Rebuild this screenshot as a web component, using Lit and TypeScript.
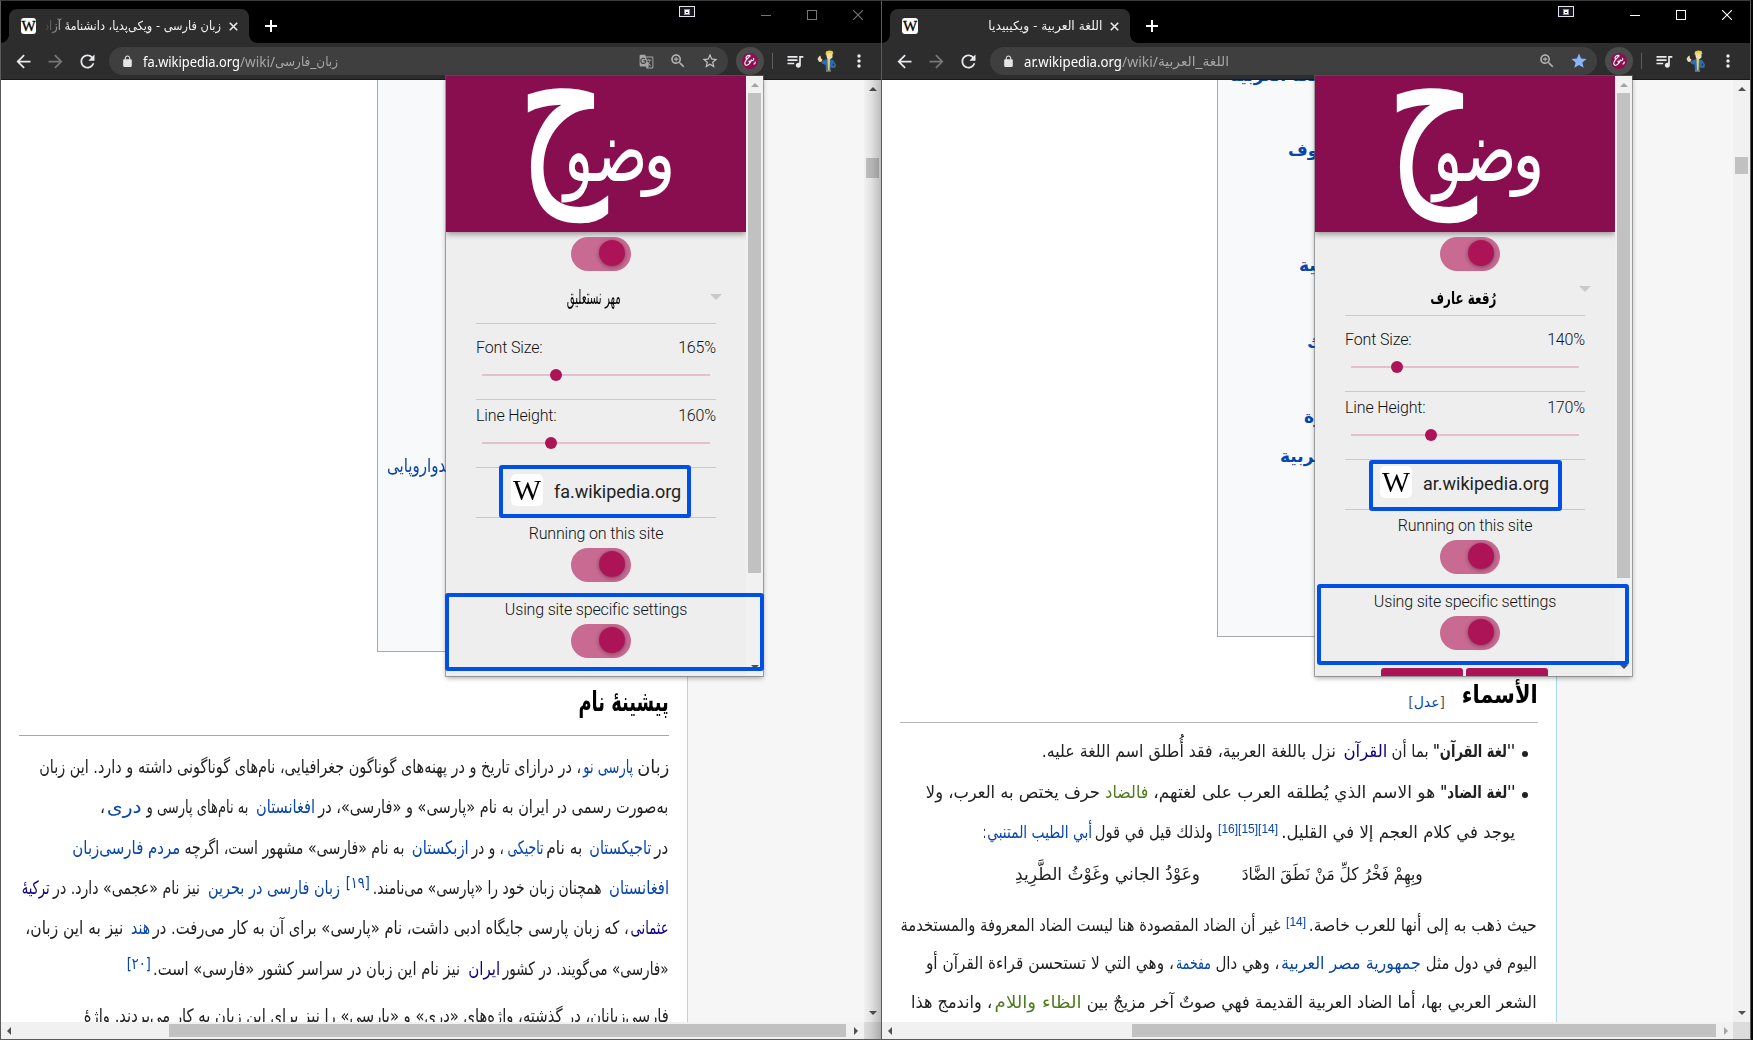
import { LitElement, html, css, svg, nothing } from "lit";
import { customElement, property } from "lit/decorators.js";
import { styleMap } from "lit/directives/style-map.js";

type Kind = "t" | "b" | "a" | "v" | "g" | "s" | "n";
/** kind, text, right edge, left edge (window-independent page x) */
type Seg = [Kind, string, number, number];

interface WinData {
  id: "fa" | "ar";
  tab: string;
  host: string;
  path: string;
  pathWidth: number;
}

/** One run of text squeezed or stretched to a given width. */
@customElement("fit-text")
class FitText extends LitElement {
  @property({ type: Number }) width = 0;
  @property() origin = "right";
  static styles = css`
    :host { display: block; flex: none; white-space: nowrap; }
    .run { display: inline-block; white-space: pre; }
  `;
  render() {
    return html`<span class="run"><slot></slot></span>`;
  }
  updated() {
    const run = this.renderRoot.querySelector(".run") as HTMLElement;
    this.style.width = this.width + "px";
    run.style.transform = "none";
    const natural = run.getBoundingClientRect().width;
    if (natural > 0) {
      run.style.transformOrigin = this.origin + " center";
      run.style.transform = `scaleX(${this.width / natural})`;
    }
  }
}

const P = {
  back: "M20 11H7.83l5.59-5.59L12 4l-8 8 8 8 1.41-1.41L7.83 13H20v-2z",
  fwd: "M12 4l-1.41 1.41L16.17 11H4v2h12.17l-5.58 5.59L12 20l8-8z",
  reload: "M17.65 6.35C16.2 4.9 14.21 4 12 4c-4.42 0-7.99 3.58-7.99 8s3.57 8 7.99 8c3.73 0 6.84-2.55 7.73-6h-2.08c-.82 2.33-3.04 4-5.65 4-3.31 0-6-2.69-6-6s2.69-6 6-6c1.66 0 3.14.69 4.22 1.78L13 11h7V4l-2.35 2.35z",
  lock: "M18 8h-1V6c0-2.76-2.24-5-5-5S7 3.24 7 6v2H6c-1.1 0-2 .9-2 2v10c0 1.1.9 2 2 2h12c1.1 0 2-.9 2-2V10c0-1.1-.9-2-2-2zM15.1 8H8.9V6c0-1.71 1.39-3.1 3.1-3.1s3.1 1.39 3.1 3.1v2z",
  translate: "M21 4H11l-1-3H3c-1.1 0-2 .9-2 2v15c0 1.1.9 2 2 2h8l1 3h9c1.1 0 2-.9 2-2V6c0-1.1-.9-2-2-2zM7 16c-2.76 0-5-2.24-5-5s2.24-5 5-5c1.35 0 2.48.5 3.35 1.3L9.03 8.57c-.38-.36-1.04-.78-2.03-.78-1.74 0-3.15 1.44-3.15 3.21S5.26 14.21 7 14.21c2.01 0 2.84-1.44 2.92-2.41H7v-1.71h4.68c.07.31.12.61.12 1.02C11.8 13.97 9.89 16 7 16zm6.17-5.42h3.7c-.43 1.25-1.11 2.43-2.05 3.47-.31-.35-.6-.72-.86-1.1l-.79-2.37zm8.33 9.92c0 .55-.45 1-1 1H14l2-2.5-1.04-3.1 3.1 3.1.92-.92-3.3-3.25.02-.02c1.13-1.25 1.93-2.69 2.4-4.22H20v-1.3h-4.53V8h-1.29v1.29h-1.44L11.46 5.5h9.04c.55 0 1 .45 1 1v14z",
  zoom: "M15.5 14h-.79l-.28-.27C15.41 12.59 16 11.11 16 9.5 16 5.91 13.09 3 9.5 3S3 5.91 3 9.5 5.91 16 9.5 16c1.61 0 3.09-.59 4.23-1.57l.27.28v.79l5 4.99L20.49 19l-4.99-5zm-6 0C7.01 14 5 11.99 5 9.5S7.01 5 9.5 5 14 7.01 14 9.5 11.99 14 9.5 14zM12.5 10.2h-2.3v2.3H8.8v-2.3H6.5V8.8h2.3V6.5h1.4v2.3h2.3v1.4z",
  starLine: "M22 9.24l-7.19-.62L12 2 9.19 8.63 2 9.24l5.46 4.73L5.82 21 12 17.27 18.18 21l-1.63-7.03L22 9.24zM12 15.4l-3.76 2.27 1-4.28-3.32-2.88 4.38-.38L12 6.1l1.71 4.04 4.38.38-3.32 2.88 1 4.28L12 15.4z",
  star: "M12 17.27L18.18 21l-1.64-7.03L22 9.24l-7.19-.61L12 2 9.19 8.63 2 9.24l5.46 4.73L5.82 21z",
  queue: "M15 6H3v2h12V6zm0 4H3v2h12v-2zM3 16h8v-2H3v2zM17 6v8.18c-.31-.11-.65-.18-1-.18-1.66 0-3 1.34-3 3s1.34 3 3 3 3-1.34 3-3V8h3V6h-5z",
};

const icon = (d: string, size: number, fill: string) =>
  html`<svg width=${size} height=${size} viewBox="0 0 24 24"><path d=${d} fill=${fill}></path></svg>`;

const tri = (dir: string, fill = "#505050") => {
  const pts: Record<string, string> = {
    up: "0,4 4,0 8,4", down: "0,0 8,0 4,4", left: "4,0 4,8 0,4", right: "0,0 4,4 0,8",
  };
  const v = dir === "up" || dir === "down";
  return html`<svg width=${v ? 8 : 4} height=${v ? 4 : 8}><polygon points=${pts[dir]} fill=${fill}></polygon></svg>`;
};

const faLines: Seg[][] = [
  [["t", "زبان", 669, 637], ["a", "پارسی نو", 633, 583], ["t", "، در درازای تاریخ و در پهنه‌های گوناگون جغرافیایی، نام‌های گوناگونی داشته و دارد. این زبان", 581, 39]],
  [["t", "به‌صورت رسمی در ایران به نام «پارسی» و «فارسی»، در", 668, 318], ["a", "افغانستان", 315, 256], ["t", "به نام‌های پارسی و", 248, 146], ["a", "دری", 142, 107], ["t", "،", 105, 100]],
  [["t", "در", 668, 654], ["a", "تاجیکستان", 651, 589], ["t", "به نام", 582, 546], ["a", "تاجیکی", 543, 507], ["t", "، و در", 504, 472], ["a", "ازبکستان", 469, 412], ["t", "به نام «فارسی» مشهور است، اگرچه", 404, 184], ["a", "مردم فارسی‌زبان", 180, 72]],
  [["a", "افغانستان", 669, 609], ["t", "همچنان زبان خود را «پارسی» می‌نامند.", 602, 373], ["s", "[۱۹]", 370, 346], ["a", "زبان فارسی در بحرین", 340, 208], ["t", "نیز نام «عجمی» دارد. در", 200, 53], ["v", "ترکیهٔ", 50, 22]],
  [["v", "عثمانی", 669, 631], ["t", "، که زبان پارسی جایگاه ادبی داشت، نام «پارسی» برای آن به کار می‌رفت. در", 629, 153], ["a", "هند", 150, 131], ["t", "نیز به این زبان،", 123, 25]],
  [["t", "«فارسی» می‌گویند. در کشور", 669, 503], ["v", "ایران", 500, 468], ["t", "نیز نام این زبان در سراسر کشور «فارسی» است.", 460, 153], ["s", "[۲۰]", 151, 127]],
  [["t", "فارسی‌زبانان، در گذشته، واژه‌های «دری» و «پارسی» را نیز برای این زبان به کار می‌بردند. واژهٔ", 669, 84]],
];

const arList: Seg[][] = [
  [["b", "''لغة القرآن\"", 1514, 1432], ["t", "بما أن", 1428, 1391], ["v", "القرآن", 1386, 1342], ["t", "نزل باللغة العربية، فقد أُطلق اسم اللغة عليه.", 1335, 1041]],
  [["b", "''لغة الضاد\"", 1514, 1439], ["t", "هو الاسم الذي يُطلقه العرب على لغتهم،", 1434, 1152], ["g", "فالضاد", 1147, 1104], ["t", "حرف يختص به العرب، ولا", 1099, 925]],
  [["t", "يوجد في كلام العجم إلا في القليل.", 1515, 1281], ["n", "[14][15][16]", 1278, 1218], ["t", "ولذلك قيل في قول", 1213, 1095], ["a", "أبي الطيب المتنبي", 1092, 987], ["t", ":", 986, 983]],
  [["t", "وبِهِمْ فَخْرُ كلِّ مَنْ نَطَقَ الضَّادَ", 1423, 1242], ["t", "وعَوْذُ الجاني وغَوْثُ الطَّرِيدِ", 1200, 1015]],
];
const arPara: Seg[][] = [
  [["t", "حيث ذهب به إلى أنها للعرب خاصة.", 1537, 1309], ["n", "[14]", 1306, 1286], ["t", "غير أن الضاد المقصودة هنا ليست الضاد المعروفة والمستخدمة", 1280, 900]],
  [["t", "اليوم في دول مثل", 1537, 1426], ["a", "جمهورية مصر العربية", 1421, 1281], ["t", "، وهي دال", 1279, 1215], ["a", "مفخمة", 1211, 1176], ["t", "، وهي التي لا تستحسن قراءة القرآن أو", 1174, 926]],
  [["t", "الشعر العربي بها، أما الضاد العربية القديمة فهي صوتٌ آخر مزيجٌ بين", 1537, 1087], ["g", "الظاء واللام", 1082, 995], ["t", "، واندمج هذا", 992, 911]],
];

const line = (segs: Seg[], edge: number, cls = "") => {
  let prev = edge;
  return html`<div class="line ${cls}">${segs.map(([k, t, r, l]) => {
    const gap = prev - r;
    prev = l;
    return html`<fit-text class="k-${k}" .width=${r - l} style=${styleMap({ marginRight: gap + "px" })}>${t}</fit-text>`;
  })}</div>`;
};

const avatar = svg`<svg width="22" height="22" viewBox="0 0 22 22">
  <path d="M3 6.5 4.5 5.5 5 8.5 6.5 9.5 5.5 12 3 11.8 1.5 9z" fill="#f0dfae"/>
  <path d="M5 11.5 11 9 17 10 20 14.500 19.500 17.500 16 18 15 17 14.500 21 10 21 9.500 15 6 13.500z" fill="#2f6eb5"/>
  <path d="M11.500 9 14 9 13.500 20 12 20z" fill="#f2cf55"/>
  <path d="M17 13 18.500 15 16.500 16z" fill="#2b2b2b"/>
  <path d="M10 3 16.500 2.500 16.500 7.500 14 9.500 11 8.500z" fill="#f0dfae"/>
  <path d="M9.500 4.500 10 1.500 13 .5 16.500 1 17.500 4 15.500 3.500 11.500 3.500 11 5z" fill="#ecd03f"/>
  <path d="M10 20.500h5v1h-5z" fill="#c8a94a"/></svg>`;

const logo = html`<svg class="logo" width="150" height="140" viewBox="0 0 150 140" direction="rtl">
  <g fill="#fff" font-family="DejaVu Sans" text-anchor="middle">
    <text transform="translate(133 96) scale(.92 1)" font-size="74">و</text>
    <text transform="translate(80 98) scale(.69 1)" font-size="88">ضو</text>
    <text transform="translate(36 91) scale(.7 1)" font-size="202">ح</text>
  </g></svg>`;

@customElement("app-root")
class AppRoot extends LitElement {
  static styles = css`
    * { box-sizing: border-box; }
    :host { display: block; width: 1753px; height: 1040px; overflow: hidden; background: #050505; font-family: "DejaVu Sans", sans-serif; }
    .desk { display: flex; height: 1040px; }
    svg { display: block; flex: none; }
    .logo { overflow: visible; }
    .win { position: relative; flex: none; height: 1040px; display: flex; flex-direction: column; border: solid #5a5a5a; border-width: 1px 0 1px 1px; border-top-color: #3a3a3a; overflow: hidden; background: #fff; }
    .fa { width: 881px; }
    .ar { width: 870px; border-right-width: 1px; }

    .strip { flex: none; height: 42px; display: flex; background: #000; padding-left: 8px; }
    .tab { position: relative; width: 240px; margin-top: 8px; height: 34px; border-radius: 8px 8px 0 0; background: #2d2d2d; display: flex; align-items: center; padding: 0 11px 0 12px; }
    .tab::before, .tab::after { content: ""; position: absolute; bottom: 0; width: 8px; height: 8px; }
    .tab::before { left: -8px; background: radial-gradient(circle at 0 0, #000 7.5px, #2d2d2d 8px); }
    .tab::after { right: -8px; background: radial-gradient(circle at 100% 0, #000 7.5px, #2d2d2d 8px); }
    .fav { display: flex; align-items: center; justify-content: center; background: #fff; color: #000; font-family: "Liberation Serif", serif; }
    .fav.s { width: 16px; height: 16px; border-radius: 3px; font-size: 15px; line-height: 16px; overflow: hidden; -webkit-text-stroke: .3px #000; }
    .title { flex: 1; height: 22px; line-height: 22px; margin-left: 8px; display: flex; direction: rtl; font-size: 12.5px; color: #f2f2f2; margin-right: 8px; }
    .title.fade { -webkit-mask-image: linear-gradient(90deg, transparent, #000 24px); mask-image: linear-gradient(90deg, transparent, #000 24px); }
    .plus { margin: 19px 0 0 16px; }
    .rec { margin: 5px 0 0 auto; }
    .ctl { display: flex; height: 28px; }
    .ctl span { width: 46px; display: flex; align-items: center; justify-content: center; }

    .bar { flex: none; height: 37px; display: flex; align-items: center; background: #2d2d2d; padding: 0 6px; border-bottom: 1px solid #191919; }
    .cell { width: 32px; height: 28px; display: flex; align-items: center; justify-content: center; flex: none; }
    .omni { flex: 1; height: 28px; border-radius: 14px; background: #3f3f3f; margin: 0 8px 0 6px; display: flex; align-items: center; padding-right: 2px; font: 14.5px/28px "Noto Sans", "Open Sans", "DejaVu Sans", sans-serif; color: #fff; }
    .omni .lock { width: 34px; padding-left: 12px; }
    .omni .dim { color: #a3a6aa; }
    .omni .ara { font: 13.5px/28px "DejaVu Sans", sans-serif; }
    .grow { flex: 1; }
    .ext { width: 28px; height: 28px; border-radius: 14px; background: #4b4b4b; display: flex; align-items: center; justify-content: center; flex: none; }
    .sep { width: 1px; height: 16px; background: #5d5d5d; margin: 0 5px 0 8px; flex: none; }
    .cell.av { margin-left: 1px; }
    .cell.q { padding-left: 2px; }

    .view { flex: 1; display: flex; min-height: 0; }
    .page { flex: 1; display: flex; min-width: 0; background: #f6f6f6; overflow: hidden; }
    .art { position: relative; background: #fff; border-right: 1px solid #a7d7f9; display: flex; flex-direction: column; height: 942px; overflow: hidden; flex: none; }
    .fa .art { width: 687px; }
    .ar .art { width: 675px; }
    .info { align-self: flex-end; border: 1px solid #a2a9b1; border-top: 0; background: #f8f9fa; flex: none; overflow: hidden; color: #0645ad; font-size: 19px; }
    .fa .info { width: 294px; height: 572px; margin-right: 16px; padding: 370px 0 0 9px; line-height: 30px; }
    .ar .info { width: 322px; height: 557px; margin-right: 17px; font-weight: bold; font-size: 17px; }
    .info div { white-space: nowrap; line-height: 26px; height: 26px; }
    .i0 { margin: -18px 0 0 12px; }
    .i1 { margin: 49px 0 0 70px; }
    .i2 { margin: 89px 0 0 81px; }
    .i3 { margin: 51px 0 0 89px; }
    .i4 { margin: 49px 0 0 86px; }
    .i5 { margin: 13px 0 0 62px; }

    .line { display: flex; direction: rtl; align-items: center; color: #202122; font-size: 18.5px; flex: none; }
    .fa .line { height: 40.35px; line-height: 40.35px; }
    .ar .line { height: 38.8px; line-height: 38.8px; font-size: 17.5px; }
    .k-a { color: #0645ad; }
    .k-v { color: #0b0080; }
    .k-g { color: #507a1e; }
    .k-b { font-weight: bold; }
    .k-s { color: #0645ad; font-size: 16px; position: relative; top: -5px; }
    .ar .k-n { color: #0645ad; font: 12px/38px "Liberation Sans", sans-serif; position: relative; top: -3px; }
    .h { display: flex; direction: rtl; align-items: center; color: #000; font-weight: bold; font-size: 28px; flex: none; margin-left: 18px; border-bottom: 1px solid #a2a9b1; }
    .fa .h { height: 84px; padding-top: 16px; margin-right: 18px; line-height: 50px; }
    .ar .h { height: 86px; padding-top: 31px; margin-right: 18px; font-size: 25px; line-height: 40px; border-color: #b8b8b8; }
    .edit { font-size: 14px; font-weight: normal; color: #54595d; margin: 13px 17px 0 0; }
    .edit i { font-style: normal; color: #0645ad; }
    .text { display: flex; flex-direction: column; }
    .fa .text { padding: 11px 17px 0 0; }
    .ar .text { padding: 8px 17px 0 0; }
    .li { display: flex; direction: rtl; align-items: center; height: 41px; }
    .ar .li .line { height: 41px; line-height: 41px; }
    .dot { width: 6px; height: 6px; border-radius: 3px; background: #202122; margin: 5px 11px 0 7px; flex: none; }
    .line.last { margin-top: 7px; }
    .line.verse { margin-top: 3px; }
    .line.p1 { margin-top: 12px; }

    .vs { width: 17px; background: #f1f1f1; display: flex; flex-direction: column; align-items: center; flex: none; }
    .vs .a1 { margin-top: 7px; }
    .vs .a2 { margin: auto 0 7px; }
    .vs .thumb { width: 13px; background: #c1c1c1; }
    .fa .view .thumb { height: 20px; margin-top: 67px; }
    .ar .view .thumb { height: 17px; margin-top: 66px; }
    .hs { flex: none; height: 17px; display: flex; align-items: center; background: #f1f1f1; }
    .hs .l { margin-left: 6px; width: 4px; }
    .hs .thumb { height: 13px; background: #c1c1c1; }
    .fa .hs .thumb { width: 677px; margin-left: 158px; }
    .ar .hs .thumb { width: 584px; margin-left: 240px; }
    .hs .r { margin-left: 8px; }
    .hs .corner { width: 17px; height: 17px; background: #dcdcdc; margin-left: auto; }
    .shade { position: absolute; right: 0; top: 79px; bottom: 0; width: 17px; background: linear-gradient(90deg, rgba(0,0,0,0), rgba(0,0,0,.07) 45%, rgba(0,0,0,.22)); }

    .pop { position: absolute; top: 75px; width: 317px; height: 600px; display: flex; background: #eee; box-shadow: 0 0 0 1px rgba(110,110,110,.55), 0 2px 5px rgba(0,0,0,.35); overflow: hidden; }
    .fa .pop { left: 445px; }
    .ar .pop { left: 433px; }
    .body { width: 300px; display: flex; flex-direction: column; font: 300 16px/22px Roboto, sans-serif; color: #111; }
    .head { flex: none; height: 156px; background: #880e4f; display: flex; justify-content: center; padding: 7px 0 0 10px; box-shadow: 0 2px 6px rgba(0,0,0,.4); }
    .in { padding: 0 30px; display: flex; flex-direction: column; }
    .tog { flex: none; width: 60px; height: 34px; border-radius: 17px; background: #c96a92; margin: 5px 0 0 95px; padding: 3px 6px 0 0; display: flex; justify-content: flex-end; }
    .tog.below { margin-top: 3px; }
    .tog b { width: 26px; height: 26px; border-radius: 13px; background: #ad1457; box-shadow: 0 1px 4px rgba(0,0,0,.4); }
    .name { display: flex; border-bottom: 1px solid #c9c9c9; color: #000; font-family: "DejaVu Sans", sans-serif; font-weight: normal; }
    .fa .name { height: 53px; padding-top: 23px; }
    .ar .name { height: 45px; padding-top: 15px; font-weight: bold; }
    .name fit-text { direction: rtl; font-size: 17px; line-height: 24px; }
    .fa .name fit-text { margin: -9px 0 0 91px; font-size: 20px; }
    .ar .name fit-text { margin-left: 85px; }
    .name svg { margin: 0 -6px 0 auto; }
    .row { border-bottom: 1px solid #c9c9c9; height: 68px; padding-top: 5px; }
    .row.first { height: 76px; padding-top: 13px; }
    .lab { display: flex; justify-content: space-between; letter-spacing: -.15px; }
    .sld { height: 20px; margin: 6px 6px 0 6px; display: flex; align-items: center; background: linear-gradient(#e4bfce, #e4bfce) 0 50% / 100% 2px no-repeat; }
    .sld b { width: 12px; height: 12px; border-radius: 6px; background: #ad1457; }
    .site { height: 50px; border-bottom: 1px solid #c9c9c9; display: flex; padding: 6px 0 0 35px; font: 400 18px/36px Roboto, sans-serif; color: #212121; }
    .fav.l { width: 32px; height: 32px; border-radius: 5px; font-size: 29px; line-height: 32px; margin-right: 11px; overflow: hidden; }
    .fav.l fit-text { height: 32px; margin-top: -1px; }
    .cap { text-align: center; margin-top: 5px; letter-spacing: -.17px; }
    .cap.two { margin-top: 17px; }
    .btns { display: flex; gap: 3px; margin: 18px 0 0 36px; }
    .btns b { width: 82px; height: 36px; border-radius: 3px; background: #ad1457; }
    .pop .thumb { height: 480px; margin-top: 6px; }
    .ar .pop .thumb { height: 485px; }
    .mark { position: absolute; border: 4px solid #0050e6; border-radius: 3px; }
    .fa .m1 { left: 498px; top: 464px; width: 192px; height: 53px; }
    .fa .m2 { left: 444px; top: 592px; width: 319px; height: 78px; }
    .ar .m1 { left: 487px; top: 459px; width: 193px; height: 51px; }
    .ar .m2 { left: 435px; top: 583px; width: 312px; height: 81px; }
  `;

  private toggle(cls = "") {
    return html`<div class="tog ${cls}"><b></b></div>`;
  }

  private popup(w: WinData) {
    const fa = w.id === "fa";
    return html`<div class="pop">
      <div class="body">
        <div class="head">${logo}</div>
        <div class="in">
          ${this.toggle()}
          <div class="name">
            <fit-text .width=${fa ? 54 : 66}>${fa ? "مهر نستعلیق" : "رُقعة عارف"}</fit-text>
            <svg width="12" height="6"><polygon points="0,0 12,0 6,6" fill="#c9c9c9"></polygon></svg>
          </div>
          <div class="row first">
            <div class="lab"><span>Font Size:</span><span>${fa ? "165%" : "140%"}</span></div>
            <div class="sld"><b style=${styleMap({ marginLeft: (fa ? 68 : 40) + "px" })}></b></div>
          </div>
          <div class="row">
            <div class="lab"><span>Line Height:</span><span>${fa ? "160%" : "170%"}</span></div>
            <div class="sld"><b style=${styleMap({ marginLeft: (fa ? 63 : 74) + "px" })}></b></div>
          </div>
          <div class="site"><span class="fav l"><fit-text .width=${28} origin="left">W</fit-text></span><span>${w.host}</span></div>
          <div class="cap">Running on this site</div>
          ${this.toggle("below")}
          <div class="cap two">Using site specific settings</div>
          ${this.toggle("below")}
          <div class="btns"><b></b><b></b></div>
        </div>
      </div>
      <div class="vs"><span class="a1">${tri("up", "#a3a3a3")}</span><div class="thumb"></div><span class="a2">${tri("down")}</span></div>
    </div>
    <div class="mark m1"></div><div class="mark m2"></div>`;
  }

  private article(w: WinData) {
    if (w.id === "fa") {
      return html`<div class="art">
        <div class="info"><fit-text .width=${72} origin="left">هندواروپایی</fit-text></div>
        <div class="h"><fit-text .width=${90}>پیشینهٔ نام</fit-text></div>
        <div class="text">${faLines.map((l, i) => line(l, 670, i === 6 ? "last" : ""))}</div>
      </div>`;
    }
    return html`<div class="art">
      <div class="info">
        <div class="i0">اللغة العربية</div><div class="i1">حروف</div><div class="i2">تمثيلية</div>
        <div class="i3">ك</div><div class="i4">سورة</div><div class="i5">العربية</div>
      </div>
      <div class="h"><fit-text .width=${76}>الأسماء</fit-text><span class="edit">[<i>عدل</i>]</span></div>
      <div class="text">
        <div class="li"><span class="dot"></span>${line(arList[0], 1514)}</div>
        <div class="li"><span class="dot"></span>${line(arList[1], 1514)}</div>
        ${line(arList[2], 1539)}
        ${line(arList[3], 1539, "verse")}
        ${arPara.map((l, i) => line(l, 1539, i === 0 ? "p1" : ""))}
      </div>
    </div>`;
  }

  private win(w: WinData) {
    const fa = w.id === "fa";
    const c = fa ? "#777" : "#fff";
    return html`<section class="win ${w.id}">
      <div class="strip">
        <div class="tab">
          <span class="fav s">W</span>
          <span class="title ${fa ? "fade" : ""}"><fit-text .width=${fa ? 177 : 114}>${w.tab}</fit-text></span>
          <svg width="9" height="9"><path d="M.8.8l7.400 7.400M8.200.8L.8 8.200" stroke="#ececec" stroke-width="1.600"></path></svg>
        </div>
        <svg class="plus" width="12" height="12"><path d="M6 0v12M0 6h12" stroke="#fff" stroke-width="2"></path></svg>
        <svg class="rec" width="16" height="11" style=${styleMap({ marginRight: (fa ? 48 : 38) + "px" })}>
          <rect x=".5" y=".5" width="15" height="10" fill="#16161e" stroke="#e4e4ee"></rect>
          <rect x="5" y="3" width="6" height="6" fill="#8d8d98"></rect><rect x="6" y="4" width="4" height="4" fill="#fff"></rect><rect x="7" y="6" width="2" height="1" fill="#222"></rect>
        </svg>
        <div class="ctl">
          <span><svg width="10" height="10"><path d="M0 5.500h10" stroke=${c}></path></svg></span>
          <span><svg width="10" height="10"><rect x=".5" y=".5" width="9" height="9" fill="none" stroke=${c}></rect></svg></span>
          <span><svg width="10" height="10"><path d="M0 0l10 10M10 0L0 10" stroke=${c} stroke-width="1.100"></path></svg></span>
        </div>
      </div>
      <div class="bar">
        <span class="cell">${icon(P.back, 21, "#e8eaed")}</span>
        <span class="cell">${icon(P.fwd, 21, "#777")}</span>
        <span class="cell">${icon(P.reload, 21, "#e8eaed")}</span>
        <div class="omni">
          <span class="lock">${icon(P.lock, 13, "#e4e4e4")}</span>
          <fit-text origin="left" .width=${fa ? 97 : 98}>${w.host}</fit-text>
          <fit-text class="dim" origin="left" .width=${fa ? 35 : 36}>/wiki/</fit-text>
          <fit-text class="dim ara" origin="left" .width=${w.pathWidth}>${w.path}</fit-text>
          <span class="grow"></span>
          ${fa ? html`<span class="cell">${icon(P.translate, 15, "#a5a5a5")}</span>` : nothing}
          <span class="cell">${icon(P.zoom, 18, "#b4b4b4")}</span>
          <span class="cell">${fa ? icon(P.starLine, 18, "#c4c4c4") : icon(P.star, 18, "#8ab4f8")}</span>
        </div>
        <span class="ext"><svg width="16" height="16" viewBox="0 0 16 16"><circle cx="8" cy="8" r="8" fill="#8c1050"></circle>
          <path d="M8.500 2.500C5 2 3 4 4.500 6.500M8.500 2.500C5 6 2.500 8 2.800 10.500 3 13.500 7.500 13 9.500 6.500M7 10.500C8.500 9.500 7.500 7 6.500 8.500M9.500 8C12.500 7.500 12 5 11 5.500M13 8.500C13.800 10 12.500 11 11.500 11" fill="none" stroke="#fff" stroke-width="1.100"></path></svg></span>
        <span class="sep"></span>
        <span class="cell q">${icon(P.queue, 20, "#e8eaed")}</span>
        <span class="cell av">${avatar}</span>
        <span class="cell"><svg width="4" height="14"><circle cx="2" cy="2" r="1.700" fill="#eee"></circle><circle cx="2" cy="7" r="1.700" fill="#eee"></circle><circle cx="2" cy="12" r="1.700" fill="#eee"></circle></svg></span>
      </div>
      <div class="view">
        <div class="page">${this.article(w)}</div>
        <div class="vs"><span class="a1">${tri("up")}</span><div class="thumb"></div><span class="a2">${tri("down")}</span></div>
      </div>
      <div class="hs"><span class="l">${tri("left")}</span><div class="thumb"></div><span class="r">${tri("right", fa ? "#505050" : "#a3a3a3")}</span><div class="corner"></div></div>
      ${fa ? html`<div class="shade"></div>` : nothing}
      ${this.popup(w)}
    </section>`;
  }

  render() {
    return html`<div class="desk">
      ${this.win({ id: "fa", tab: "زبان فارسی - ویکی‌پدیا، دانشنامهٔ آزاد", host: "fa.wikipedia.org", path: "زبان_فارسی", pathWidth: 63 })}
      ${this.win({ id: "ar", tab: "اللغة العربية - ويكيبيديا", host: "ar.wikipedia.org", path: "اللغة_العربية", pathWidth: 71 })}
    </div>`;
  }
}
